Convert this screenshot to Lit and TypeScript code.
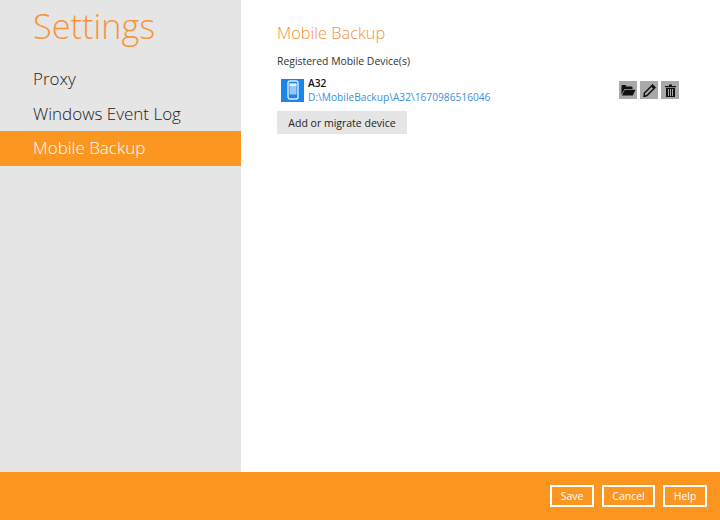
import {LitElement, html, css} from 'lit';
import {customElement} from 'lit/decorators.js';

const menu = ['Proxy', 'Windows Event Log', 'Mobile Backup'];

@customElement('app-root')
export class AppRoot extends LitElement {
  static styles = css`
    :host {
      display: flex;
      flex-direction: column;
      width: 720px;
      height: 520px;
      background: #fff;
      font-family: 'Open Sans', 'Noto Sans', sans-serif;
      overflow: hidden;
    }

    .main {
      display: flex;
      height: 472px;
    }

    .side {
      width: 241px;
      background: #e5e5e5;
      flex: none;
    }

    .side h1 {
      margin: 0;
      padding: 4px 0 0 33px;
      height: 62px;
      box-sizing: border-box;
      font-size: 34.3px;
      line-height: 44px;
      font-weight: 300;
      color: #f7953a;
    }

    .item {
      height: 34.5px;
      line-height: 34px;
      padding-left: 33px;
      font-size: 17px;
      font-weight: 300;
      color: #222;
    }

    .item.active {
      background: #fb9621;
      color: #fff;
    }

    .content {
      flex: 1;
      padding: 22px 0 0 36px;
      min-width: 0;
    }

    h2 {
      margin: 0;
      font-size: 16.4px;
      line-height: 22px;
      font-weight: 300;
      color: #f0913a;
    }

    .label {
      margin-top: 10px;
      font-size: 10.4px;
      line-height: 14px;
      color: #333;
    }

    .device {
      display: flex;
      align-items: center;
      margin: 10px 41px 0 4px;
      height: 24px;
    }

    .thumb {
      width: 23px;
      height: 23px;
      flex: none;
      background: #1b86ea;
      display: flex;
      align-items: center;
      justify-content: center;
    }

    .info {
      flex: 1;
      margin-left: 4px;
      font-size: 10.2px;
      line-height: 14px;
      white-space: nowrap;
    }

    .name {
      font-weight: 600;
      color: #111;
    }

    .path {
      color: #3c8fdc;
    }

    .tools {
      display: flex;
      gap: 3px;
    }

    .tool {
      width: 18px;
      height: 18px;
      background: #a9a9a9;
      display: flex;
      align-items: center;
      justify-content: center;
    }

    .add {
      display: block;
      margin-top: 9px;
      width: 130px;
      height: 23px;
      border: none;
      padding: 0;
      background: #e5e5e5;
      color: #222;
      font-family: inherit;
      font-size: 10.5px;
    }

    .footer {
      height: 48px;
      background: #fb9621;
      display: flex;
      justify-content: flex-end;
      align-items: center;
      gap: 8px;
      padding-right: 13px;
    }

    .footer button {
      height: 22px;
      border: 2px solid #fff;
      background: none;
      color: #fff;
      font-family: inherit;
      font-size: 10.5px;
      padding: 0;
      box-sizing: border-box;
    }

    .footer .narrow {
      width: 44px;
    }

    .footer .wide {
      width: 53px;
    }
  `;

  render() {
    return html`
      <div class="main">
        <nav class="side">
          <h1>Settings</h1>
          ${menu.map(
            (m) =>
              html`<div class="item ${m === 'Mobile Backup' ? 'active' : ''}">
                ${m}
              </div>`
          )}
        </nav>
        <section class="content">
          <h2>Mobile Backup</h2>
          <div class="label">Registered Mobile Device(s)</div>
          <div class="device">
            <div class="thumb">
              <svg width="12" height="20" viewBox="0 0 12 20">
                <rect x="1" y="1" width="10" height="18" rx="2" fill="none" stroke="#fff" stroke-width="1.4" opacity=".85" />
                <rect x="2.5" y="3.5" width="7" height="11" fill="#fff" opacity=".55" />
                <rect x="2.5" y="3.5" width="7" height="2.5" fill="#fff" opacity=".8" />
              </svg>
            </div>
            <div class="info">
              <div class="name">A32</div>
              <div class="path">D:\\MobileBackup\\A32\\1670986516046</div>
            </div>
            <div class="tools">
              <div class="tool">
                <svg width="15" height="12" viewBox="0 0 15 12">
                  <path d="M0.5 11V2q0-1 1-1h3l1 1.500h5q1 0 1 1V5H3.500L0.500 11z" fill="#111" />
                  <path d="M3.800 5.800H14.500L11.800 11.500H1z" fill="#111" />
                </svg>
              </div>
              <div class="tool">
                <svg width="13" height="13" viewBox="0 0 13 13">
                  <path d="M9.500 1l2.500 2.500-8 8L1 12.500 1.500 9z" fill="none" stroke="#111" stroke-width="1.500" />
                  <path d="M8 2.500l2.500 2.500 1.500-1.500L9.500 1z" fill="#111" />
                </svg>
              </div>
              <div class="tool">
                <svg width="11" height="13" viewBox="0 0 11 13">
                  <path d="M0 2h11v1.200H0zM4 .5h3V2H4z" fill="#111" />
                  <path d="M1 4h9v9H1zM3 5v7h1V5zM5 5v7h1V5zM7 5v7h1V5z" fill="#111" fill-rule="evenodd" />
                </svg>
              </div>
            </div>
          </div>
          <button class="add">Add or migrate device</button>
        </section>
      </div>
      <footer class="footer">
        <button class="narrow">Save</button>
        <button class="wide">Cancel</button>
        <button class="narrow">Help</button>
      </footer>
    `;
  }
}
